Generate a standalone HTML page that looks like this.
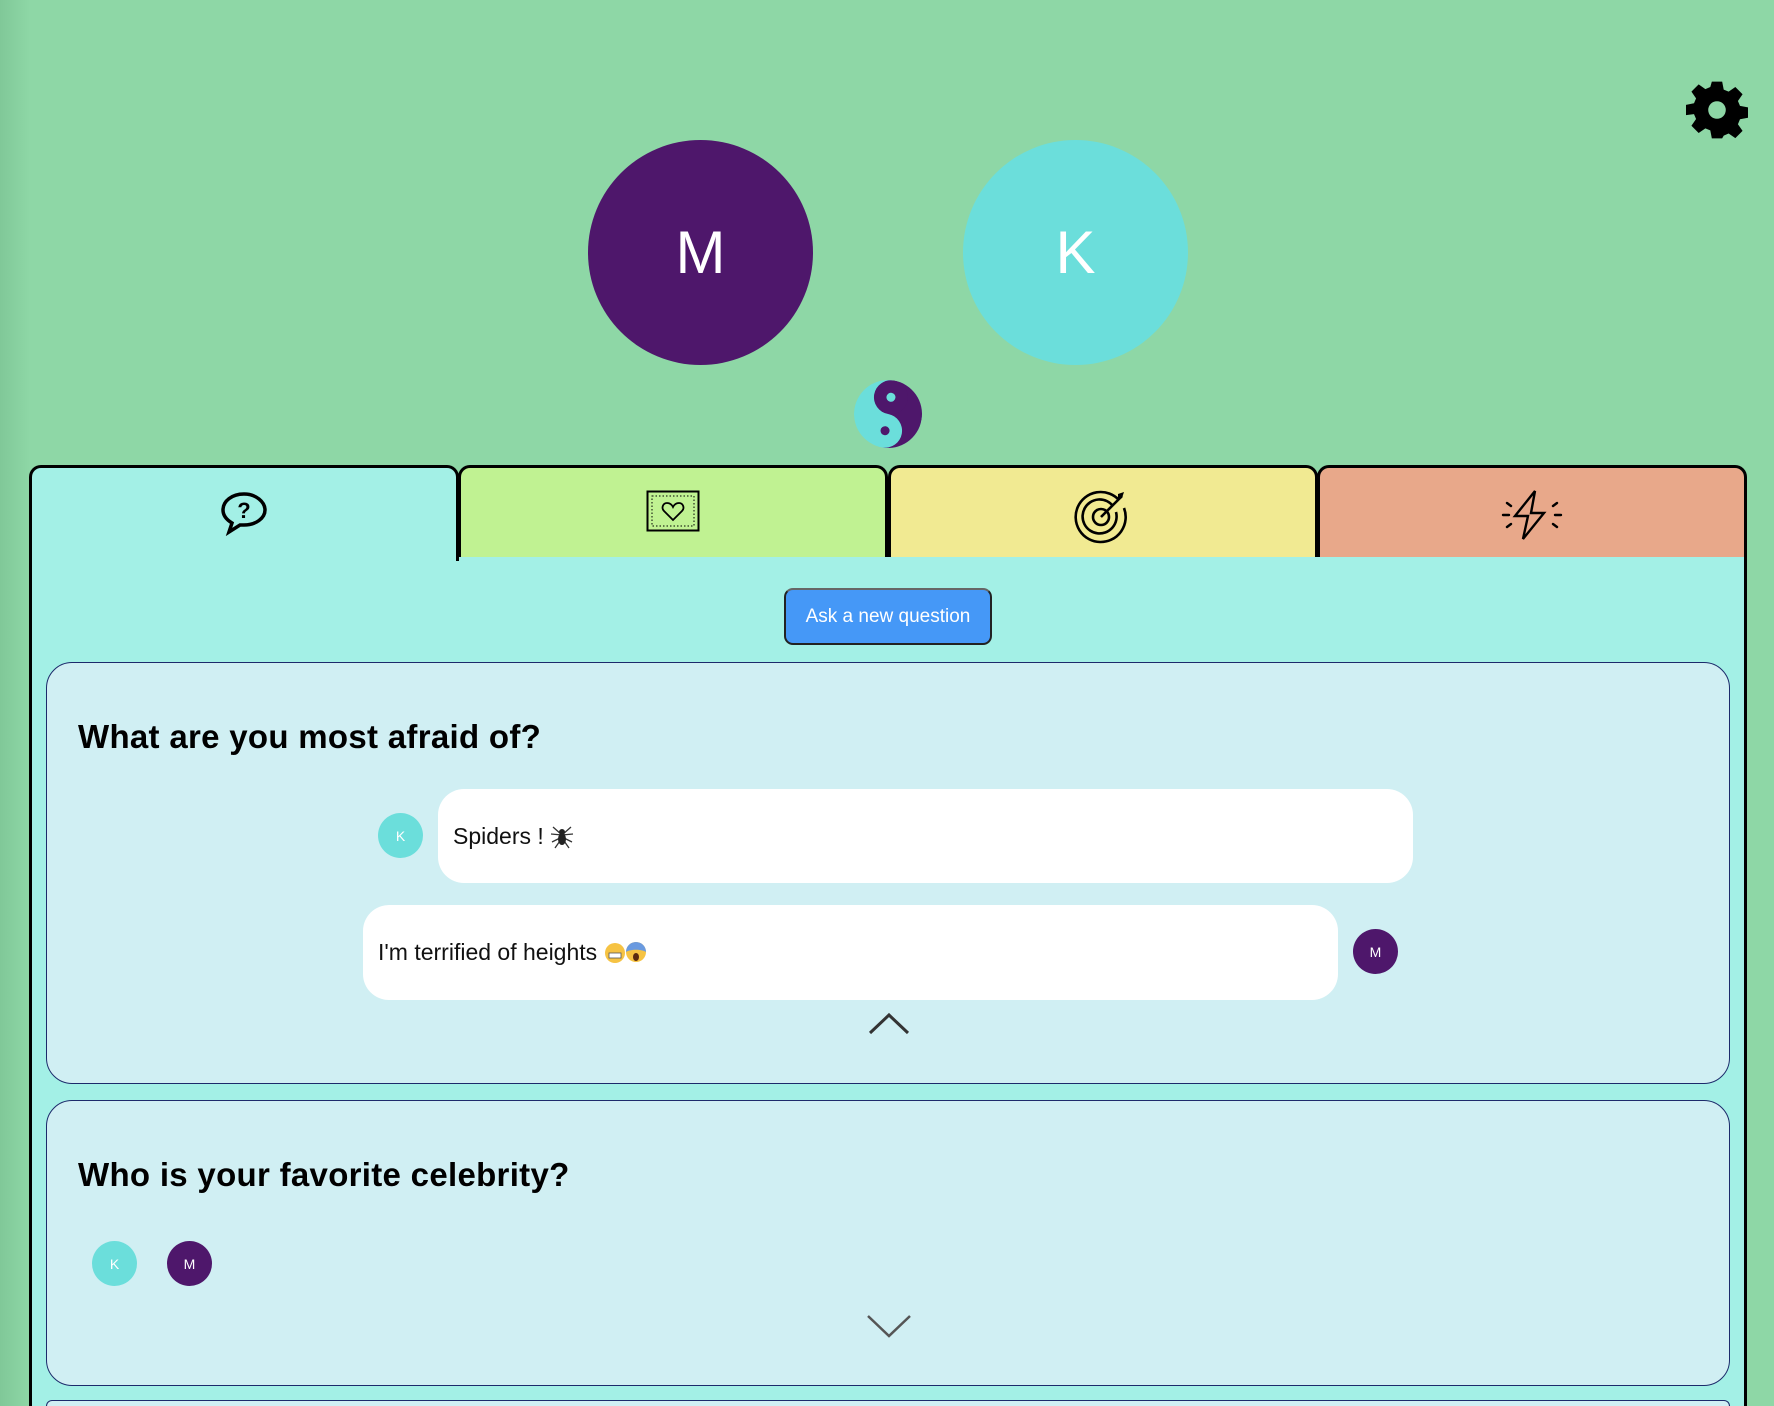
<!DOCTYPE html>
<html><head><meta charset="utf-8"><style>
*{margin:0;padding:0;box-sizing:border-box}
html,body{width:1774px;height:1406px;overflow:hidden}
#wrap{width:1774px;height:1406px;overflow:hidden;position:relative;background:linear-gradient(90deg,#80c898 0,#8ed7a6 30px);font-family:"Liberation Sans",sans-serif}
.abs{position:absolute}
.circ{border-radius:50%;display:flex;align-items:center;justify-content:center;color:#fff}
.tab{position:absolute;top:465px;height:92px;border:3px solid #000;border-bottom:none;border-radius:12px 12px 0 0;display:flex;align-items:flex-start;justify-content:center;padding-top:22px}
.card{position:absolute;left:46px;width:1684px;background:#d0eff3;border:1.5px solid #1c2a6b;border-radius:26px}
.title{position:absolute;left:31px;font-weight:bold;font-size:33px;color:#000;letter-spacing:0.3px}
.bubble{position:absolute;background:#fff;border-radius:26px;font-size:23px;display:flex;align-items:center;color:#111}
</style></head><body><div id="wrap">
<svg class="abs" style="left:1686px;top:79px" width="62" height="62" viewBox="0 0 24 24"><path fill="#000" fill-rule="evenodd" d="M10 1h4l.6 3.1 1.9.8 2.6-1.8 2.8 2.8-1.8 2.6.8 1.9 3.1.6v4l-3.1.6-.8 1.9 1.8 2.6-2.8 2.8-2.6-1.8-1.9.8L14 23h-4l-.6-3.1-1.9-.8-2.6 1.8-2.8-2.8 1.8-2.6-.8-1.9L0 14v-4l3.1-.6.8-1.9-1.8-2.6 2.8-2.8 2.6 1.8 1.9-.8zM12 8.6a3.4 3.4 0 1 0 0 6.8 3.4 3.4 0 1 0 0-6.8z"/></svg>
<div class="abs circ" style="left:588px;top:140px;width:225px;height:225px;background:#4e176b;font-size:60px">M</div>
<div class="abs circ" style="left:963px;top:140px;width:225px;height:225px;background:#6bdedb;font-size:60px">K</div>
<svg class="abs" style="left:854px;top:380px" width="68" height="68" viewBox="-34 -34 68 68"><defs><clipPath id="c"><circle r="34"/></clipPath></defs><g transform="rotate(10)" clip-path="url(#c)"><circle r="34" fill="#6bdedb"/><rect x="0" y="-34" width="34" height="68" fill="#4e176b"/><circle cy="-17" r="17" fill="#4e176b"/><circle cy="17" r="17" fill="#6bdedb"/><circle cy="-17" r="4.5" fill="#6bdedb"/><circle cy="17" r="4.5" fill="#4e176b"/></g></svg>
<div class="abs" style="left:29px;top:555px;width:1718px;height:851px;background:#a3f0e6;border-left:3px solid #000;border-right:3px solid #000"></div>
<div class="tab" style="left:29px;width:430px;background:#a3f0e6;height:96px"><svg width="50" height="46" viewBox="0 0 50 46"><path d="M25 4C13 4 4 11 4 20c0 6 4 10 9 13l-3 9 11-7c1 0 3 0 4 0 12 0 21-7 21-15S37 4 25 4z" fill="none" stroke="#000" stroke-width="3.5"/><text x="25" y="28" text-anchor="middle" font-family="Liberation Sans" font-weight="bold" font-size="22">?</text></svg></div>
<div class="tab" style="left:458px;width:430px;background:#c0f292"><svg width="54" height="42" viewBox="0 0 54 42"><rect x="1.5" y="1.5" width="51" height="39" fill="none" stroke="#000" stroke-width="2"/><rect x="6" y="6" width="42" height="30" fill="none" stroke="#000" stroke-width="1" stroke-dasharray="1.5 2"/><path d="M27 30L18 21c-3-3-1-8 3-8 3 0 5 2 6 4 1-2 3-4 6-4 4 0 6 5 3 8z" fill="none" stroke="#000" stroke-width="1.8"/></svg></div>
<div class="tab" style="left:888px;width:430px;background:#f1ea92;padding-top:18px"><svg width="58" height="58" viewBox="0 0 58 58"><g fill="none" stroke="#000" stroke-width="2.6"><path d="M45 14A25 25 0 1 0 50 22"/><path d="M39 20A17 17 0 1 0 42 26"/><circle cx="27" cy="31" r="8"/><path d="M27 31L48 10"/></g><path d="M44 8l6-2-2 6-4 2z" fill="#000"/></svg></div>
<div class="tab" style="left:1317px;width:430px;background:#e8a88a;padding-top:20px"><svg width="62" height="54" viewBox="0 0 62 54"><g fill="none" stroke="#000" stroke-width="2.4" stroke-linecap="round"><path d="M34 3L14 28h13l-5 23 21-26H30z"/><path d="M2 27h6M54 27h6M6 15l4 3M6 39l4-3M56 15l-4 3M56 39l-4-3"/></g></svg></div>
<div class="abs" style="left:784px;top:588px;width:208px;height:57px;background:#4598f7;border:2px solid #222;border-top-color:#666;border-radius:9px;color:#fff;font-size:19px;display:flex;align-items:center;justify-content:center">Ask a new question</div>
<div class="card" style="top:662px;height:422px">
<div class="title" style="top:55px">What are you most afraid of?</div>
<div class="abs circ" style="left:331px;top:150px;width:45px;height:45px;background:#6bdedb;font-size:14px">K</div>
<div class="bubble" style="left:391px;top:126px;width:975px;height:94px;padding-left:15px">Spiders !&nbsp;<svg width="24" height="26" viewBox="0 0 24 26"><g stroke="#333" stroke-width="1.3" fill="none"><path d="M12 12L3 4M12 12L1 11M12 14L2 19M12 15L5 25M12 12L21 4M12 12L23 11M12 14L22 19M12 15L19 25"/></g><ellipse cx="12" cy="16" rx="4" ry="6" fill="#222"/><circle cx="12" cy="9" r="3" fill="#222"/></svg></div>
<div class="bubble" style="left:316px;top:242px;width:975px;height:95px;padding-left:15px">I'm terrified of heights&nbsp;<svg width="44" height="24" viewBox="0 0 44 24"><circle cx="11" cy="12" r="10" fill="#f6c343"/><rect x="5" y="12" width="12" height="5" fill="#fff" stroke="#555" stroke-width="0.8"/><circle cx="32" cy="11" r="10" fill="#f6c343"/><path d="M22 11a10 10 0 0 1 20 0c-4-3-16-3-20 0z" fill="#6a9ae0"/><ellipse cx="32" cy="16" rx="3" ry="4" fill="#5a2a10"/></svg></div>
<div class="abs circ" style="left:1306px;top:266px;width:45px;height:45px;background:#4e176b;font-size:14px">M</div>
<svg class="abs" style="left:821px;top:349px" width="42" height="24" viewBox="0 0 42 24"><path d="M2 21L21 3l19 18" fill="none" stroke="#333" stroke-width="3"/></svg>
</div>
<div class="card" style="top:1100px;height:286px">
<div class="title" style="top:55px">Who is your favorite celebrity?</div>
<div class="abs circ" style="left:45px;top:140px;width:45px;height:45px;background:#6bdedb;font-size:14px">K</div>
<div class="abs circ" style="left:120px;top:140px;width:45px;height:45px;background:#4e176b;font-size:14px">M</div>
<svg class="abs" style="left:819px;top:212px" width="46" height="26" viewBox="0 0 46 26"><path d="M2 3l21 20L44 3" fill="none" stroke="#555" stroke-width="2.5"/></svg>
</div>
<div class="abs" style="left:46px;top:1400px;width:1684px;height:6px;background:#d0eff3;border:1.5px solid #1c2a6b;border-bottom:none;border-radius:12px 12px 0 0"></div>
</div></body></html>
